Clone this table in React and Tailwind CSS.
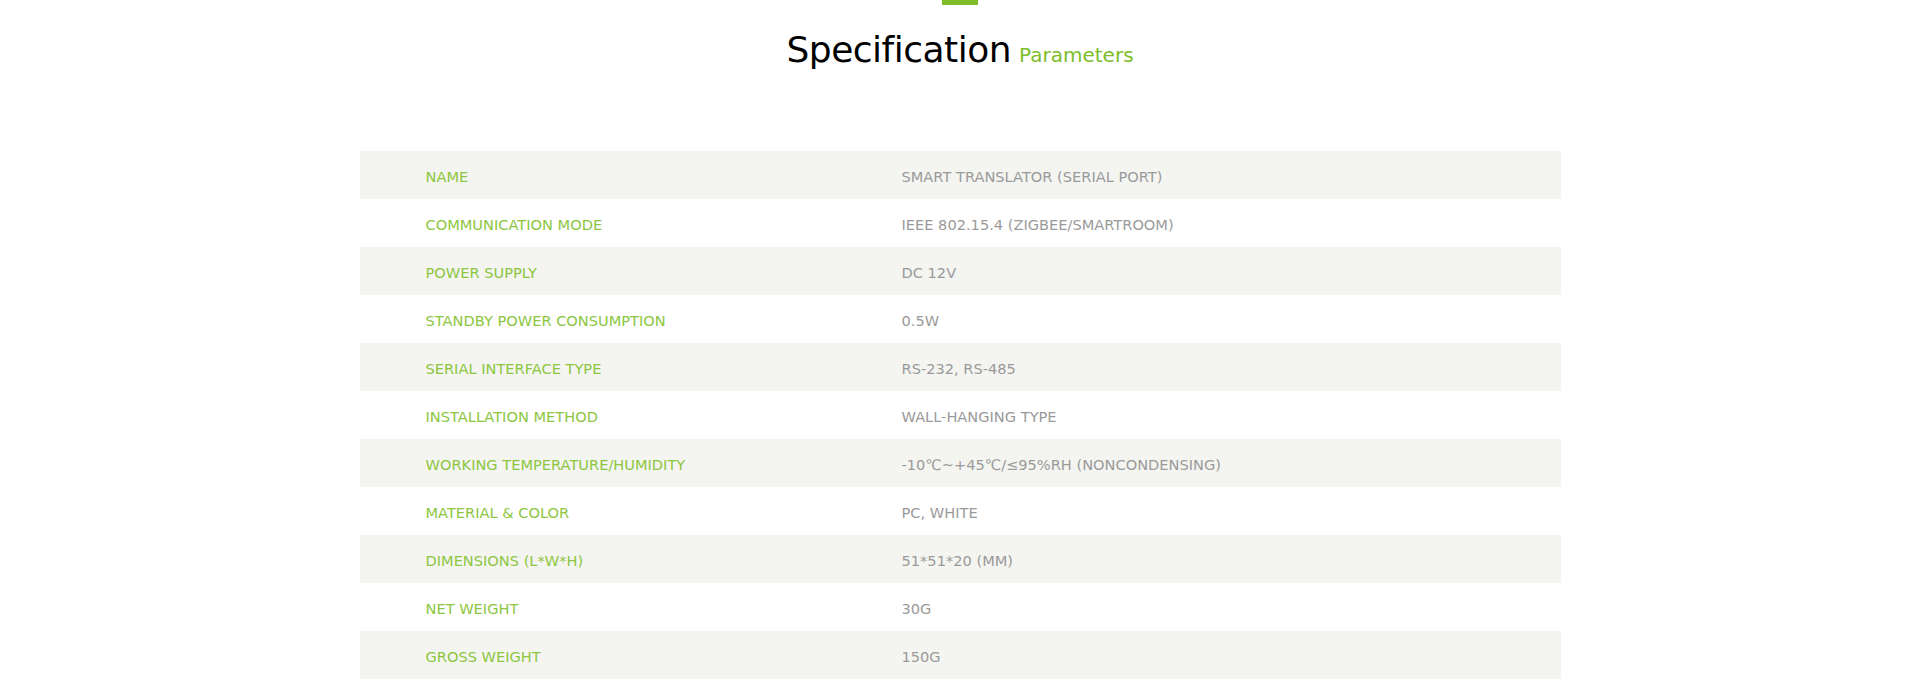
const specs = [
  ['NAME', 'SMART TRANSLATOR (SERIAL PORT)'],
  ['COMMUNICATION MODE', 'IEEE 802.15.4 (ZIGBEE/SMARTROOM)'],
  ['POWER SUPPLY', 'DC 12V'],
  ['STANDBY POWER CONSUMPTION', '0.5W'],
  ['SERIAL INTERFACE TYPE', 'RS-232, RS-485'],
  ['INSTALLATION METHOD', 'WALL-HANGING TYPE'],
  ['WORKING TEMPERATURE/HUMIDITY', '-10℃~+45℃/≤95%RH (NONCONDENSING)'],
  ['MATERIAL & COLOR', 'PC, WHITE'],
  ['DIMENSIONS (L*W*H)', '51*51*20 (MM)'],
  ['NET WEIGHT', '30G'],
  ['GROSS WEIGHT', '150G'],
];

export default function App() {
  return (
    <div className="min-h-screen bg-white font-['DejaVu_Sans',Verdana,sans-serif]">
      <div className="flex flex-col items-center">
        <div className="w-[36px] h-[5px] bg-[#7dbd2a]" />
        <h2 className="mt-[23px] flex items-baseline gap-[8px]">
          <span className="text-[36px] leading-[44px] text-black tracking-[-0.5px]">Specification</span>
          <span className="text-[20px] text-[#7dbd2a]">Parameters</span>
        </h2>
      </div>
      <div className="w-[1201px] mx-auto mt-[79px]">
        {specs.map(([label, value], i) => (
          <div
            key={label}
            className={`grid grid-cols-[542px_1fr] h-[48px] pt-[3px] items-center text-[14.6px] ${i % 2 === 0 ? 'bg-[#f4f5f1]' : 'bg-white'}`}
          >
            <div className="pl-[66px] text-[#8cc63f]">{label}</div>
            <div className="text-[#9a9a9a]">{value}</div>
          </div>
        ))}
      </div>
    </div>
  );
}
